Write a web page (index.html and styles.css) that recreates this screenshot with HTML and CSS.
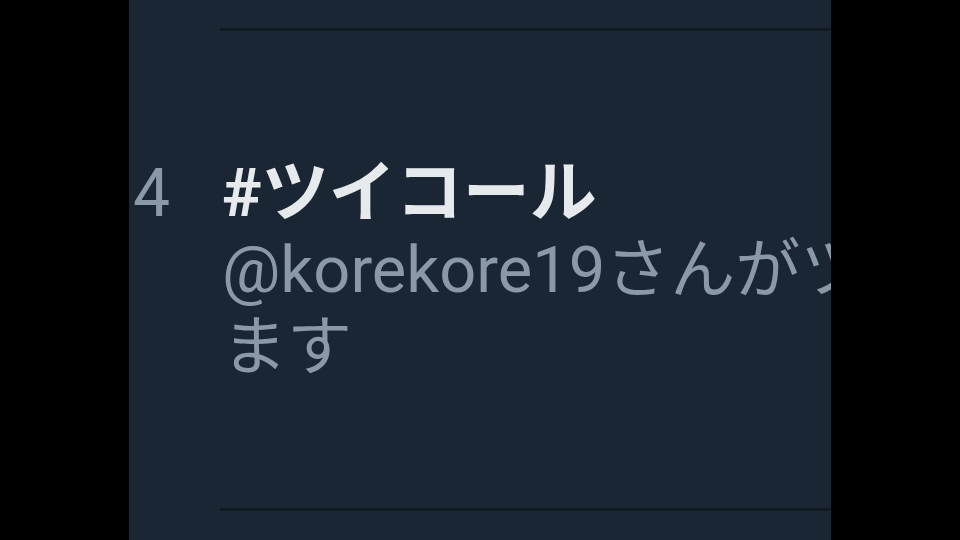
FILE: index.html
```html
<!DOCTYPE html>
<html lang="ja">
<head>
    <meta charset="UTF-8">
    <meta name="viewport" content="width=device-width, initial-scale=1.0">
    <title>トレンド</title>
    <link rel="stylesheet" href="styles.css">
</head>
<body>
    <div class="screen">
        <div class="edge"></div>

        <main class="timeline">
            <div class="divider"></div>

            <div class="trend">
                <span class="rank">4</span>
                <div class="trend-body">
                    <div class="trend-name">#ツイコール</div>
                    <div class="trend-meta">@korekore19さんがツイートしています</div>
                </div>
            </div>

            <div class="divider"></div>
        </main>

        <div class="edge"></div>
    </div>
</body>
</html>
```

FILE: styles.css
```css
:root {
    --panel: #1b2634;
    --line: #111921;
    --text: #e7eaed;
    --muted: #8b99a7;
}

html, body {
    margin: 0;
    height: 100%;
    background: #000;
}

body {
    font-family: Roboto, "Noto Sans CJK JP", sans-serif;
    overflow: hidden;
}

.screen {
    display: grid;
    grid-template-columns: 129px 702px 1fr;
    height: 540px;
}

.edge {
    background: #000;
}

.timeline {
    background: var(--panel);
    padding-top: 28px;
    overflow: hidden;
    display: flex;
    flex-direction: column;
}

.divider {
    height: 3px;
    margin-left: 91px;
    background: var(--line);
    flex: none;
}

.trend {
    display: flex;
    align-items: baseline;
    height: 477px;
    padding-top: 124px;
    box-sizing: border-box;
}

.rank {
    flex: none;
    width: 89px;
    padding-left: 4px;
    font-size: 66px;
    line-height: 77px;
    color: var(--muted);
}

.trend-body {
    flex: none;
    width: 1090px;
}

.trend-name {
    font-size: 67px;
    font-weight: bold;
    line-height: 77px;
    color: var(--text);
}

.trend-meta {
    font-size: 65px;
    line-height: 77px;
    color: var(--muted);
}
```
